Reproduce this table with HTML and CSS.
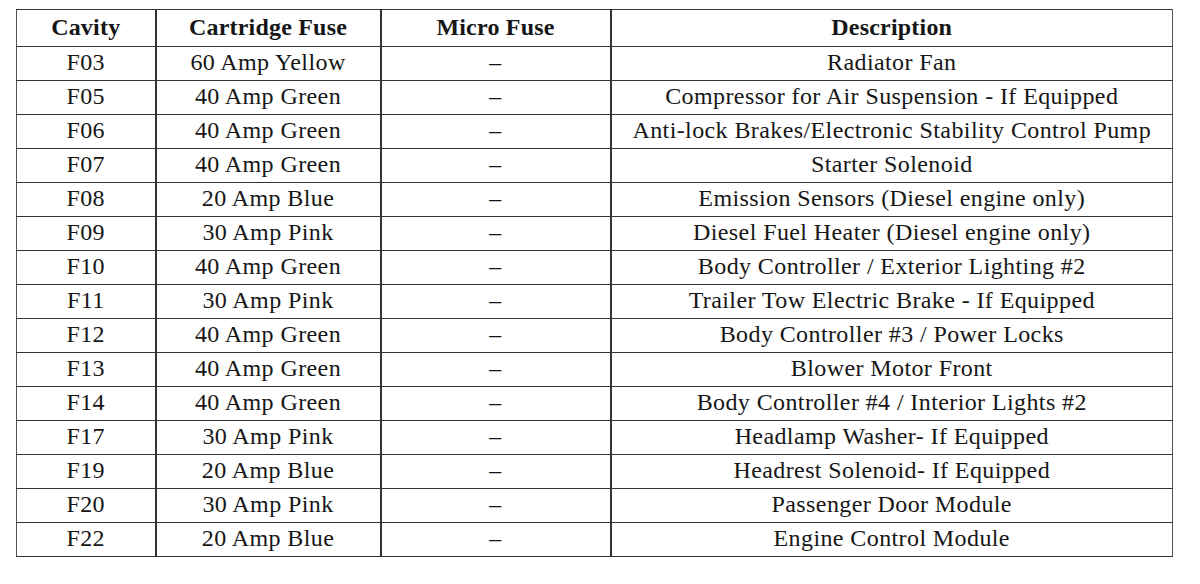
FILE: index.html
```html
<!DOCTYPE html>
<html>
<head>
<meta charset="utf-8">
<link rel="stylesheet" href="styles.css">
</head>
<body>
<table class="fuse-table">
  <colgroup>
    <col class="c-cavity">
    <col class="c-cart">
    <col class="c-micro">
    <col class="c-desc">
  </colgroup>
  <thead>
    <tr><th>Cavity</th><th>Cartridge Fuse</th><th>Micro Fuse</th><th>Description</th></tr>
  </thead>
  <tbody>
    <tr><td>F03</td><td>60 Amp Yellow</td><td>–</td><td>Radiator Fan</td></tr>
    <tr><td>F05</td><td>40 Amp Green</td><td>–</td><td>Compressor for Air Suspension - If Equipped</td></tr>
    <tr><td>F06</td><td>40 Amp Green</td><td>–</td><td>Anti-lock Brakes/Electronic Stability Control Pump</td></tr>
    <tr><td>F07</td><td>40 Amp Green</td><td>–</td><td>Starter Solenoid</td></tr>
    <tr><td>F08</td><td>20 Amp Blue</td><td>–</td><td>Emission Sensors (Diesel engine only)</td></tr>
    <tr><td>F09</td><td>30 Amp Pink</td><td>–</td><td>Diesel Fuel Heater (Diesel engine only)</td></tr>
    <tr><td>F10</td><td>40 Amp Green</td><td>–</td><td>Body Controller / Exterior Lighting #2</td></tr>
    <tr><td>F11</td><td>30 Amp Pink</td><td>–</td><td>Trailer Tow Electric Brake - If Equipped</td></tr>
    <tr><td>F12</td><td>40 Amp Green</td><td>–</td><td>Body Controller #3 / Power Locks</td></tr>
    <tr><td>F13</td><td>40 Amp Green</td><td>–</td><td>Blower Motor Front</td></tr>
    <tr><td>F14</td><td>40 Amp Green</td><td>–</td><td>Body Controller #4 / Interior Lights #2</td></tr>
    <tr><td>F17</td><td>30 Amp Pink</td><td>–</td><td>Headlamp Washer- If Equipped</td></tr>
    <tr><td>F19</td><td>20 Amp Blue</td><td>–</td><td>Headrest Solenoid- If Equipped</td></tr>
    <tr><td>F20</td><td>30 Amp Pink</td><td>–</td><td>Passenger Door Module</td></tr>
    <tr><td>F22</td><td>20 Amp Blue</td><td>–</td><td>Engine Control Module</td></tr>
  </tbody>
</table>
</body>
</html>
```

FILE: styles.css
```css
html, body {
  margin: 0;
  background: #ffffff;
}
body {
  padding: 9px 0 0 16px;
  font-family: "Liberation Serif", "DejaVu Serif", serif;
  color: #161616;
}
.fuse-table {
  border-collapse: collapse;
  table-layout: fixed;
  width: 1156px;
  border: 1px solid #555;
}
.c-cavity { width: 139px; }
.c-cart { width: 225px; }
.c-micro { width: 230px; }
.c-desc { width: 562px; }
.fuse-table th,
.fuse-table td {
  border-top: 1px solid #333;
  border-bottom: 1px solid #333;
  border-left: 2px solid #333;
  border-right: 2px solid #333;
  text-align: center;
  padding: 0;
  font-size: 24px;
  letter-spacing: 0.4px;
  line-height: 1;
  white-space: nowrap;
}
.fuse-table th:first-child,
.fuse-table td:first-child { border-left: 1px solid #555; }
.fuse-table th:last-child,
.fuse-table td:last-child { border-right: 1px solid #555; }
.fuse-table th {
  height: 34px;
  padding-bottom: 2px;
  font-weight: bold;
  letter-spacing: 0.2px;
}
.fuse-table td {
  height: 30px;
  padding-bottom: 3px;
  font-weight: normal;
}
```
